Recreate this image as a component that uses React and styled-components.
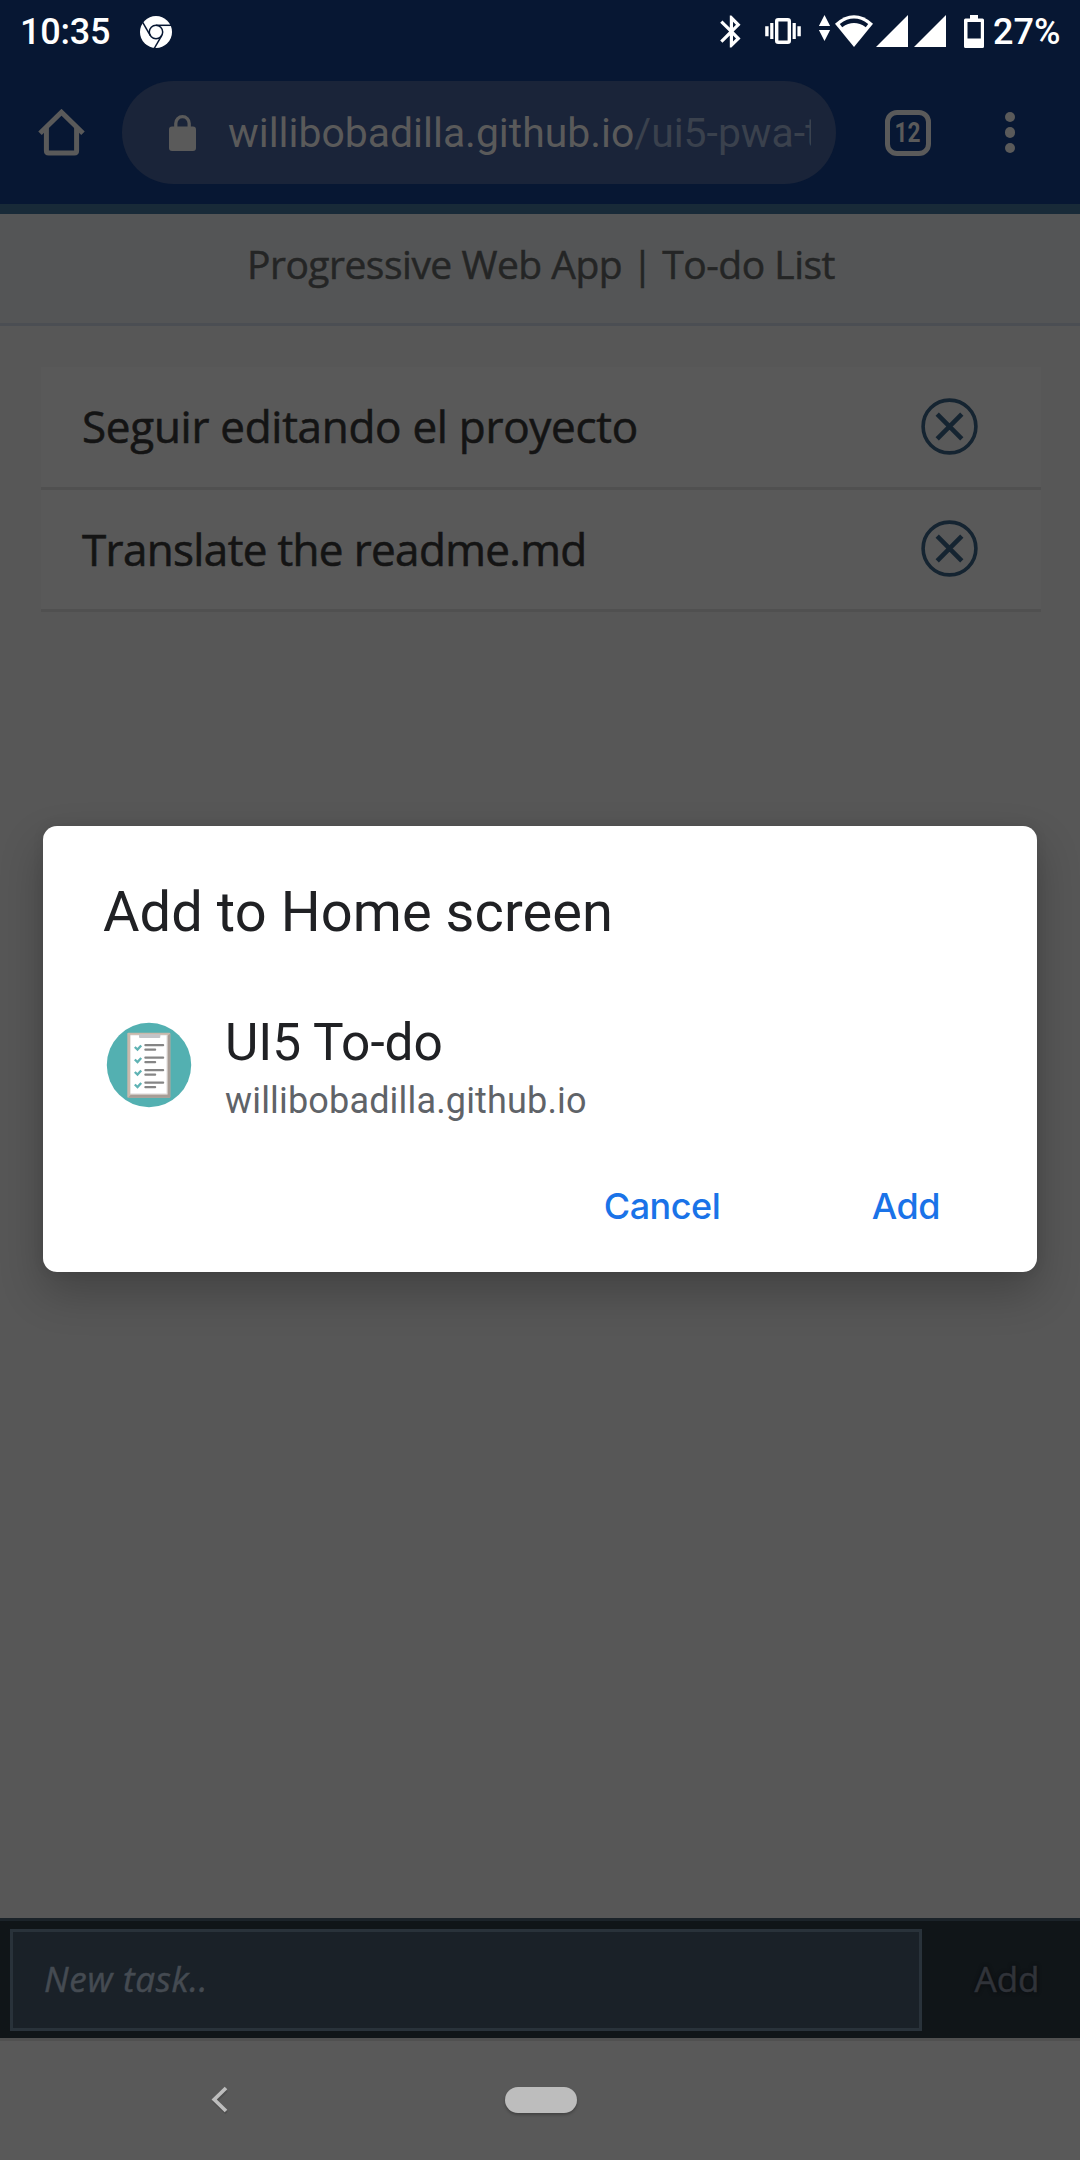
import React from "react";
import styled, { createGlobalStyle } from "styled-components";

const GlobalStyle = createGlobalStyle`
  * { box-sizing: border-box; }
  body { margin: 0; background: #575757; font-family: Roboto, sans-serif; }
  button { border: 0; margin: 0; padding: 0; background: none; }
`;

const Screen = styled.div`
  width: 1080px;
  height: 2160px;
  display: flex;
  flex-direction: column;
  overflow: hidden;
  background: #575757;
`;

/* ---------- Status bar ---------- */

const StatusBar = styled.header`
  flex: none;
  height: 64px;
  padding: 0 19.5px 0 20px;
  display: flex;
  align-items: center;
  background: #071733;
  color: #fff;
`;

const StatusText = styled.span`
  font-size: 36px;
  font-weight: 500;
  line-height: 64px;
  letter-spacing: ${(p) => p.$tracking || 0}px;
`;

const Icon = styled.svg`
  display: block;
  flex: none;
  width: ${(p) => p.$w}px;
  height: ${(p) => p.$h}px;
  margin-left: ${(p) => p.$gap || 0}px;
`;

const StatusRight = styled.div`
  margin-left: auto;
  display: flex;
  align-items: center;
  gap: 9px;
`;

/* ---------- Browser toolbar ---------- */

const Toolbar = styled.div`
  flex: none;
  height: 140px;
  padding: 0 65px 3px 38px;
  display: flex;
  align-items: center;
  background: #071733;
`;

const AddressPill = styled.div`
  width: 714px;
  height: 103px;
  margin: 17px 0 0 37px;
  align-self: flex-start;
  padding: 0 25px 0 47px;
  border-radius: 52px;
  display: flex;
  align-items: center;
  background: #1a2439;
`;

const Url = styled.div`
  flex: 1;
  margin: 1px 0 0 32px;
  overflow: hidden;
  white-space: nowrap;
  font-size: 40.9px;
  line-height: 60px;
  color: #3a414d;
`;

const Host = styled.span`
  color: #5a5a5a;
`;

const TabCount = styled.div`
  width: 46px;
  height: 46px;
  margin-left: 49px;
  border: 5px solid #5a5a5a;
  border-radius: 12px;
  display: flex;
  align-items: center;
  justify-content: center;
  color: #5a5a5a;
  font-size: 27px;
  font-weight: 700;
  line-height: 36px;
`;

const Condensed = styled.span`
  display: block;
  margin-left: -2px;
  transform: scaleX(0.84);
`;

const MenuDots = styled.div`
  display: flex;
  flex-direction: column;
  gap: 5px;
  margin-left: auto;
`;

const Dot = styled.span`
  width: 10.5px;
  height: 10.5px;
  border-radius: 50%;
  background: #5a5a5a;
`;

/* ---------- Page ---------- */

const AccentStrip = styled.div`
  flex: none;
  height: 10px;
  background: #182a38;
`;

const PageHeader = styled.div`
  flex: none;
  height: 112px;
  border-bottom: 3px solid #4b4e53;
  padding: 0 0 9px 2px;
  display: flex;
  align-items: center;
  justify-content: center;
  background: #545556;
`;

const PageTitle = styled.h1`
  margin: 0;
  font: 400 39px/54px "Open Sans", sans-serif;
  letter-spacing: -0.5px;
  color: #242525;
  -webkit-text-stroke: 0.5px #242525;
`;

const PageBody = styled.main`
  flex: 1;
  padding: 41px 39px 0 41px;
`;

const TaskList = styled.ul`
  margin: 0;
  padding: 0;
  list-style: none;
`;

const Task = styled.li`
  height: ${(p) => p.$h}px;
  padding: 0 63px 2px 41px;
  border-bottom: 3px solid #505050;
  display: flex;
  align-items: center;
  justify-content: space-between;
  background: #595959;
`;

const TaskName = styled.span`
  font: 400 44px/60px "Open Sans", sans-serif;
  letter-spacing: ${(p) => p.$tracking}px;
  color: #141414;
  -webkit-text-stroke: 0.6px #141414;
`;

/* ---------- New task bar ---------- */

const Composer = styled.footer`
  flex: none;
  height: 120px;
  border-top: 3px solid #1b2329;
  padding: 8px 0 7px 10px;
  display: flex;
  background: #101518;
`;

const TaskField = styled.div`
  width: 912px;
  border: 3px solid #29323a;
  padding: 0 0 3px 31px;
  display: flex;
  align-items: center;
  background: #1a2128;
  font: italic 400 35px/48px "Open Sans", sans-serif;
  letter-spacing: 0.7px;
  color: #454b52;
  -webkit-text-stroke: 0.5px #454b52;
`;

const AddButton = styled.button`
  flex: 1;
  padding: 0 0 3px 12px;
  font: 400 35px/48px "Open Sans", sans-serif;
  color: #303339;
  -webkit-text-stroke: 0.5px #303339;
  text-shadow: 0 0 4px #08090b;
`;

/* ---------- System navigation ---------- */

const NavBar = styled.nav`
  flex: none;
  height: 122px;
  border-top: 3px solid #505050;
  padding: 0 0 1px 210px;
  display: flex;
  align-items: center;
  background: #595959;
`;

const HomePill = styled.div`
  width: 72px;
  height: 26px;
  margin-left: 274.5px;
  border-radius: 13px;
  background: #bdbdbd;
  box-shadow: 0 2px 3px rgba(0, 0, 0, 0.25);
`;

/* ---------- Dialog ---------- */

const DialogLayer = styled.div`
  position: absolute;
  top: 0;
  left: 0;
  width: 1080px;
  height: 2160px;
  padding-bottom: 62px;
  display: flex;
  align-items: center;
  justify-content: center;
`;

const Dialog = styled.section`
  width: 994px;
  height: 446px;
  padding: 49px 60px 0;
  border-radius: 14px;
  background: #fff;
  box-shadow: 0 20px 44px rgba(0, 0, 0, 0.24), 0 0 12px rgba(0, 0, 0, 0.08);
`;

const DialogTitle = styled.h2`
  margin: 0;
  font-size: 56px;
  font-weight: 400;
  line-height: 74px;
  letter-spacing: 0.07px;
  color: #202124;
`;

const AppRow = styled.div`
  display: flex;
  align-items: center;
  margin-top: 54px;
  padding-left: 2px;
  height: 124px;
`;

const AppText = styled.div`
  margin: 5px 0 0 32px;
  display: flex;
  flex-direction: column;
`;

const AppName = styled.span`
  font-size: 51.4px;
  line-height: 66px;
  color: #202124;
`;

const AppHost = styled.span`
  font-size: 36px;
  line-height: 50px;
  letter-spacing: 0.17px;
  color: #5f6368;
`;

const Actions = styled.div`
  display: flex;
  justify-content: flex-end;
  gap: 151.5px;
  margin-top: 54px;
  padding-right: 37px;
`;

const Action = styled.button`
  font: 500 36px/50px Inter, sans-serif;
  letter-spacing: -0.5px;
  color: #1a73e8;
`;

const ChromeIcon = () => (
  <Icon $w={32} $h={32} $gap={30} viewBox="-16 -16 32 32">
    <circle r="16" fill="#fff" />
    <g fill="none" stroke="#071733" strokeWidth="1.5">
      <circle r="6.7" />
      {[0, 120, 240].map((a) => (
        <path key={a} d="M0 -6.7H15" transform={`rotate(${a})`} />
      ))}
    </g>
  </Icon>
);

const StatusIcons = () => (
  <Icon $w={265} $h={34} viewBox="719 14 265 34" fill="#fff">
    <path
      transform="translate(712.2 11.4) scale(1.6)"
      d="M17.71 7.71L12 2h-1v7.59L6.41 5 5 6.41 10.59 12 5 17.59 6.41 19 11 14.41V22h1l5.71-5.71-4.3-4.29 4.3-4.29zM13 5.83l1.88 1.88L13 9.59V5.83zm1.88 10.46L13 18.17v-3.76l1.88 1.88z"
    />
    <rect x="776.7" y="18.7" width="12.6" height="22.6" rx="1.5" fill="none" stroke="#fff" strokeWidth="3.4" />
    <path d="M765.2 25.3h3.4v10h-3.4zM770.2 22h3.2v16h-3.2zM792.6 22h3.2v16h-3.2zM797.4 25.3h3.4v10h-3.4z" />
    <path d="M824.5 14l5.6 11h-11.2zM824.5 40l5.6-11h-11.2z" />
    <path d="M835 22.7Q854 6 873 22.7L854 46z" />
    <path d="M839.8 22.9Q854 12.3 868.2 22.9L865.8 26.2Q854 17.8 842.2 26.2z" fill="#071733" />
    <path d="M908 14v32h-32zM946 14v32h-32z" />
    <path
      fillRule="evenodd"
      d="M970 14h8v3.5h4.5q1.5 0 1.5 1.5v26.5q0 1.5-1.5 1.5h-17q-1.5 0-1.5-1.5V19q0-1.5 1.5-1.5h4.5zM967.5 21v16.5h13.3V21z"
    />
  </Icon>
);

const HomeIcon = () => (
  <Icon $w={47} $h={47} viewBox="38 109 47 47" fill="none" stroke="#5a5a5a" strokeWidth="5">
    <path d="M40 133.3L61.5 112.3L83 133.3" />
    <path d="M46.4 128V150.8q0 2.2 2.2 2.2H74.4q2.2 0 2.2-2.2V128" />
  </Icon>
);

const LockIcon = () => (
  <Icon $w={27} $h={36} viewBox="169 114 27 36">
    <rect x="169" y="125.5" width="27" height="24.5" rx="3" fill="#5a5a5a" />
    <path d="M175.8 127v-4.6a6.7 6.7 0 0 1 13.4 0V127" fill="none" stroke="#5a5a5a" strokeWidth="3.3" />
  </Icon>
);

const RemoveIcon = () => (
  <Icon $w={57} $h={57} viewBox="-28.5 -28.5 57 57" fill="none" stroke="#152431">
    <circle r="26.4" strokeWidth="3.6" />
    <path d="M-12.3 -12.3L12.3 12.3M12.3 -12.3L-12.3 12.3" strokeWidth="4.6" />
  </Icon>
);

const BackIcon = () => (
  <Icon $w={20} $h={30} viewBox="210 2085 20 30" fill="none">
    <path d="M226.5 2090.5L214.7 2101.7L226.5 2113" stroke="#4e4e4e" strokeWidth="3.5" />
    <path d="M226 2088L214.2 2099.5L226 2111" stroke="#bdbdbd" strokeWidth="3.7" />
  </Icon>
);

const AppIcon = () => (
  <Icon $w={88} $h={88} viewBox="105 1021 88 88">
    <circle cx="149" cy="1065" r="42.2" fill="#53b0b1" />
    <rect x="127.3" y="1032.8" width="43" height="65" rx="1" fill="#c8b8ab" />
    <path d="M170.3 1033.5V1097.8H128L131 1094.5H167.5V1036z" fill="#a79d96" />
    <rect x="130.3" y="1034.8" width="37.2" height="59.7" fill="#e3e1e2" />
    <rect x="130.6" y="1035.5" width="35.8" height="57.8" fill="#fff" />
    <rect x="139" y="1034.3" width="21.3" height="3.7" rx="1" fill="#c3c4c8" />
    {[0, 12.5, 25, 37.5].map((y) => (
      <g key={y} transform={`translate(0 ${y})`}>
        <path d="M134.8 1047l2.7 2.6 3.7-4.2" fill="none" stroke="#5fb3b4" strokeWidth="2.3" />
        <rect x="144.3" y="1044" width="19.9" height="2.2" rx="1" fill="#858585" />
        <rect x="144.3" y="1048.6" width="11.9" height="2.2" rx="1" fill="#858585" />
      </g>
    ))}
  </Icon>
);

const tasks = [
  { name: "Seguir editando el proyecto", height: 123, tracking: -0.28 },
  { name: "Translate the readme.md", height: 122, tracking: -0.65 },
];

export default function App() {
  return (
    <>
      <GlobalStyle />
      <Screen>
        <StatusBar>
          <StatusText $tracking={-0.2}>10:35</StatusText>
          <ChromeIcon />
          <StatusRight>
            <StatusIcons />
            <StatusText>27%</StatusText>
          </StatusRight>
        </StatusBar>
        <Toolbar>
          <HomeIcon />
          <AddressPill>
            <LockIcon />
            <Url>
              <Host>willibobadilla.github.io</Host>/ui5-pwa-t
            </Url>
          </AddressPill>
          <TabCount>
            <Condensed>12</Condensed>
          </TabCount>
          <MenuDots>
            <Dot />
            <Dot />
            <Dot />
          </MenuDots>
        </Toolbar>
        <AccentStrip />
        <PageHeader>
          <PageTitle>Progressive Web App | To-do List</PageTitle>
        </PageHeader>
        <PageBody>
          <TaskList>
            {tasks.map((t) => (
              <Task key={t.name} $h={t.height}>
                <TaskName $tracking={t.tracking}>{t.name}</TaskName>
                <RemoveIcon />
              </Task>
            ))}
          </TaskList>
        </PageBody>
        <Composer>
          <TaskField>New task..</TaskField>
          <AddButton>Add</AddButton>
        </Composer>
        <NavBar>
          <BackIcon />
          <HomePill />
        </NavBar>
      </Screen>
      <DialogLayer>
        <Dialog role="dialog">
          <DialogTitle>Add to Home screen</DialogTitle>
          <AppRow>
            <AppIcon />
            <AppText>
              <AppName>UI5 To-do</AppName>
              <AppHost>willibobadilla.github.io</AppHost>
            </AppText>
          </AppRow>
          <Actions>
            <Action>Cancel</Action>
            <Action>Add</Action>
          </Actions>
        </Dialog>
      </DialogLayer>
    </>
  );
}
